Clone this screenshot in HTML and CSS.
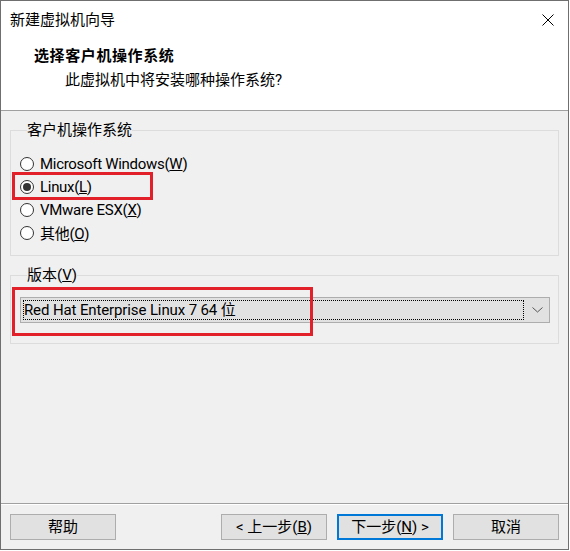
FILE: index.html
```html
<!DOCTYPE html>
<html lang="zh-CN">
<head>
<meta charset="utf-8">
<title>新建虚拟机向导</title>
<link rel="stylesheet" href="styles.css">
</head>
<body>
<div class="window">
  <div class="header">
    <div class="titlebar">
      <span class="title">新建虚拟机向导</span>
      <svg class="close" width="12" height="12" viewBox="0 0 12 12"><path d="M0.5 0.5 L11.5 11.5 M11.5 0.5 L0.5 11.5" stroke="#000" stroke-width="1" fill="none"/></svg>
    </div>
    <div class="heading">选择客户机操作系统</div>
    <div class="subheading">此虚拟机中将安装哪种操作系统?</div>
  </div>

  <div class="content">
    <fieldset class="group group-os">
      <legend>客户机操作系统</legend>
      <div class="radio"><span class="circle"></span><span class="label">Microsoft Windows(<u>W</u>)</span></div>
      <div class="radio"><span class="circle checked"></span><span class="label">Linux(<u>L</u>)</span></div>
      <div class="radio"><span class="circle"></span><span class="label">VMware ESX(<u>X</u>)</span></div>
      <div class="radio"><span class="circle"></span><span class="label">其他(<u>O</u>)</span></div>
    </fieldset>

    <fieldset class="group group-ver">
      <legend>版本(<u>V</u>)</legend>
      <div class="combo">
        <div class="combo-value">Red Hat Enterprise Linux 7 64 位</div>
        <svg class="chevron" width="11" height="6" viewBox="0 0 11 6"><path d="M0.5 0.5 L5.5 5 L10.5 0.5" stroke="#555" stroke-width="1" fill="none"/></svg>
      </div>
    </fieldset>
  </div>

  <div class="footer">
    <div class="buttons">
      <div class="btn">帮助</div>
      <div class="btn-right">
        <div class="btn">&lt; 上一步(<u>B</u>)</div>
        <div class="btn btn-default">下一步(<u>N</u>) &gt;</div>
        <div class="btn btn-cancel">取消</div>
      </div>
    </div>
  </div>

  <div class="mark mark-linux"></div>
  <div class="mark mark-version"></div>
</div>
</body>
</html>
```

FILE: styles.css
```css
html, body {
  margin: 0;
  padding: 0;
  background: #ffffff;
}

body {
  font-family: Roboto, "Noto Sans CJK SC", sans-serif;
  font-size: 15px;
  color: #000;
}

.window {
  position: relative;
  width: 569px;
  height: 550px;
  box-sizing: border-box;
  border: 1px solid #6f6f6f;
  background: #f0f0f0;
  display: flex;
  flex-direction: column;
}

.header {
  height: 110px;
  box-sizing: border-box;
  background: #fff;
  border-bottom: 1px solid #a0a0a0;
}

.titlebar {
  height: 38px;
  display: flex;
  align-items: center;
  justify-content: space-between;
  padding: 0 14px 0 9px;
}

.title {
  line-height: 20px;
}

.close {
  display: block;
}

.heading {
  margin-top: 5px;
  padding-left: 33px;
  font-weight: bold;
  letter-spacing: 0.6px;
  line-height: 24px;
}

.subheading {
  padding-left: 64px;
  line-height: 24px;
}

.content {
  flex: 1;
  padding: 9px 9px 0 9px;
}

.group {
  margin: 0;
  border: 1px solid #dcdcdc;
  padding: 0;
  min-width: 0;
}

.group legend {
  padding: 0;
  margin-left: 7px;
  line-height: 20px;
}

.group-os {
  padding: 12px 0 11px 9px;
}

.radio {
  display: flex;
  align-items: center;
  height: 23px;
  gap: 6px;
}

.label {
  letter-spacing: -0.3px;
}

.circle {
  width: 12px;
  height: 12px;
  border: 1px solid #333;
  border-radius: 50%;
  background: #fff;
  display: flex;
  align-items: center;
  justify-content: center;
}

.circle.checked::after {
  content: "";
  width: 8px;
  height: 8px;
  border-radius: 50%;
  background: #333;
}

.group-ver {
  margin-top: 9px;
  padding: 12px 8px 20px 9px;
}

.combo {
  height: 26px;
  box-sizing: border-box;
  border: 1px solid #adadad;
  background: #e1e1e1;
  display: flex;
  align-items: center;
  padding: 2px 6px 2px 2px;
}

.combo-value {
  flex: 1;
  height: 20px;
  box-sizing: border-box;
  border: 1px dotted #000;
  line-height: 18px;
  padding-left: 0;
  margin-right: 8px;
  letter-spacing: -0.12px;
}

.chevron {
  display: block;
}

.footer {
  border-top: 1px solid #a0a0a0;
}

.buttons {
  border-top: 1px solid #fff;
  padding: 9px 9px 9px 9px;
  display: flex;
  justify-content: space-between;
}

.btn-right {
  display: flex;
  gap: 10px;
}

.btn {
  width: 106px;
  height: 26px;
  box-sizing: border-box;
  border: 1px solid #adadad;
  background: #e1e1e1;
  display: flex;
  align-items: center;
  justify-content: center;
  line-height: 20px;
}

.btn-default {
  border: 2px solid #0078d7;
}

.mark {
  position: absolute;
  border: 3px solid #e2202a;
  box-sizing: border-box;
}

.mark-linux {
  left: 11px;
  top: 171px;
  width: 141px;
  height: 28px;
}

.mark-version {
  left: 11px;
  top: 286px;
  width: 301px;
  height: 49px;
}
```
